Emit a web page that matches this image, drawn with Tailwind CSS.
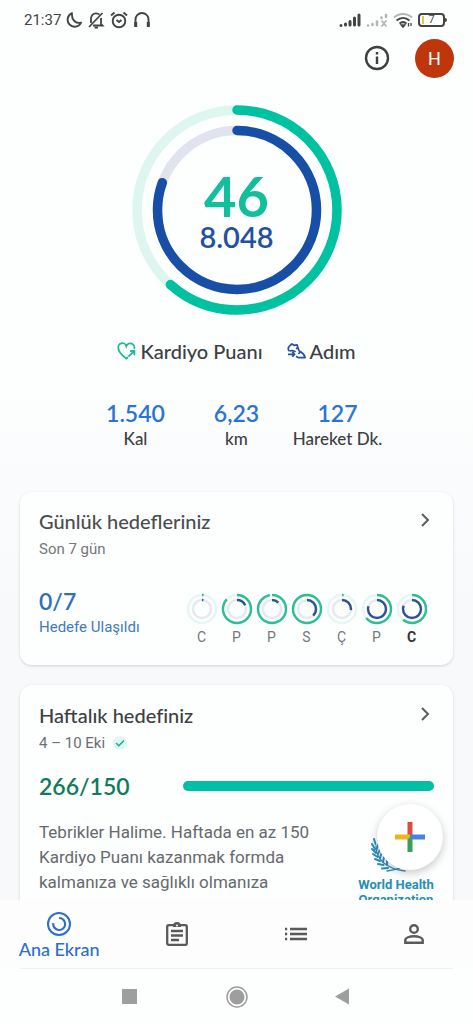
<!DOCTYPE html>
<html lang="tr">
<head>
<meta charset="utf-8">
<meta name="viewport" content="width=device-width, initial-scale=1">
<title>Ana Ekran</title>
<script src="https://cdn.jsdelivr.net/npm/@tailwindcss/browser@4"></script>
</head>
<body class="bg-white font-[Roboto,sans-serif] text-[#5f6368]">
<div class="flex h-screen flex-col overflow-hidden bg-[#fdfefe]">

  <!-- Status bar -->
  <div class="flex h-[38px] shrink-0 items-center justify-between pt-[2px] pr-[26px] pl-6 text-[#444]">
    <div class="flex items-center gap-[5px]">
      <span class="text-[15px] leading-5">21:37</span>
      <svg class="size-4" viewBox="0 0 16 16" fill="none" stroke="currentColor" stroke-width="1.9" stroke-linejoin="round"><path d="M6 1.2A7 7 0 1 0 15 10.6C10 12 5.200 8 6 1.200Z"/></svg>
      <svg class="h-[18px] w-[18px]" viewBox="0 0 18 18" fill="none" stroke="currentColor" stroke-width="1.800"><path d="M2 16 15.500 2"/><path d="M4 12V7.500C4 4.500 6 2.300 9 2.300c1.400 0 2.600.5 3.500 1.400M14 7v6l1.500 1.500H6"/><path d="M7.500 16.500h3.500" stroke-width="2"/></svg>
      <svg class="h-[18px] w-[18px]" viewBox="0 0 18 18" fill="none" stroke="currentColor" stroke-width="1.900"><circle cx="9" cy="10" r="6.300"/><path d="M1 4.500 4.500 1.500M17 4.500l-3.500-3M6.500 9l2.500 2 2.500-2"/></svg>
      <svg class="h-[18px] w-[18px]" viewBox="0 0 18 18" fill="none" stroke="currentColor" stroke-width="1.900"><path d="M2.500 15V8.500a6.500 6.500 0 0 1 13 0V15"/><path d="M2.700 11v5M15.300 11v5" stroke-width="3"/></svg>
    </div>
    <div class="flex items-center gap-[5px]">
      <svg class="h-4 w-[22px]" viewBox="0 0 22 16" stroke="#444" stroke-width="3" stroke-linecap="round"><path d="M2 13.500v0M6.500 13v-1M11 13V9.500M15.500 13V6M20 13V3"/></svg>
      <svg class="h-4 w-[22px]" viewBox="0 0 22 16" fill="none" stroke="#b5b5b5" stroke-width="2.600" stroke-linecap="round"><path d="M2 13.500v0M6.500 13v-1M11 13V9.500M15.500 6V5.500M20 5V3"/><path stroke-width="1.800" d="m16 9 4 5m0-5-4 5"/></svg>
      <svg class="h-4 w-5" viewBox="0 0 20 16" fill="none" stroke="#444" stroke-width="2"><path stroke="#b5b5b5" d="M1 5.500C6 .8 14 .8 19 5.500"/><path d="M3.500 8.500c4-3.500 9-3.500 13 0M6.500 11.500c2.300-1.800 4.700-1.800 7 0"/><path d="M8 13h4l-2 2.300ZM15.500 11v3.500M18 11v3" stroke-width="1.300"/></svg>
      <div class="flex items-center">
        <div class="relative flex h-[14px] w-[27px] items-center justify-center rounded-[4px] border-2 border-[#444] text-[11px] leading-3"><span class="absolute inset-y-[1px] left-[2px] w-[2px] bg-[#e8c64a]"></span>7</div>
        <div class="h-1 w-[2px] rounded-r bg-[#444]"></div>
      </div>
    </div>
  </div>

  <main class="relative flex min-h-0 flex-1 flex-col overflow-hidden bg-linear-to-b from-[#fdfefe] from-40% to-[#f7f9fb] to-65%">
    <!-- Account row -->
    <div class="flex h-10 shrink-0 items-center justify-end gap-6 pr-[19px]">
      <button type="button" aria-label="Bilgi" class="size-7 text-[#3c4043]"><svg viewBox="0 0 28 28" fill="none" stroke="currentColor" stroke-width="2.400"><circle cx="14" cy="14" r="11"/><path d="M14 12.500V20M14 8v2.600"/></svg></button>
      <button type="button" aria-label="Hesap" class="size-[39px] rounded-full bg-[#bf360c] text-[18px] text-white">H</button>
    </div>

    <!-- Activity rings -->
    <section class="mt-[27px] flex shrink-0 flex-col items-center">
      <div class="relative flex size-[210px] flex-col items-center justify-center pt-1 font-[Lato,sans-serif]">
        <svg class="absolute inset-0 -rotate-90" viewBox="0 0 210 210" fill="none" stroke-width="9.500" stroke-linecap="round">
          <circle cx="105" cy="105" r="100" stroke="#def6f0"/>
          <circle cx="105" cy="105" r="79.500" stroke="#e1e4ef"/>
          <circle cx="105" cy="105" r="100" stroke="#00c2a0" pathLength="1000" stroke-dasharray="616 1000"/>
          <circle cx="105" cy="105" r="79.500" stroke="#174ea6" pathLength="1000" stroke-dasharray="806 1000"/>
        </svg>
        <span class="text-[56px] leading-[50px] font-bold text-[#12bf9c]">46</span>
        <span class="text-[29px] leading-8 font-semibold text-[#2450a0]">8.048</span>
      </div>
      <div class="mt-6 flex items-center gap-6 font-[Lato,sans-serif] text-[20px] leading-6 font-medium text-[#3c4043]">
        <span class="flex items-center gap-1"><svg class="size-[19px]" viewBox="0 0 20 20" fill="none" stroke="#1dba94" stroke-width="1.900"><path d="M11.500 16 9.800 17.500C4 13 1.500 10.500 1.500 6.800a4.300 4.300 0 0 1 8.300-2.300 4.300 4.300 0 0 1 8.300 2.800"/><path d="m12 15.500 6-6M13.800 9.500H18.300V14"/></svg>Kardiyo Puanı</span>
        <span class="flex items-center gap-1"><svg class="size-[19px]" viewBox="0 0 20 20" fill="none" stroke="#2b4fa0" stroke-width="1.800" stroke-linejoin="round"><path d="M2.500 9.500C1 8 1 6.500 2 5l3-3 2.500 1.500L10.500 3l2 6c2.500 2 6 3 6.500 7.500H12l-2.500-1.500"/><path d="M2.500 9.500c3-1 5-.5 6.500 1M1 13h6.500M5.500 10.500 8 13l-2.500 2.500M9.500 7l2-.8M12 12.500l2-1.800"/></svg>Adım</span>
      </div>
      <dl class="mt-9 flex justify-center text-center font-[Lato,sans-serif]">
        <div class="flex w-[101px] flex-col-reverse"><dt class="text-[17px] leading-6 font-medium text-[#3c4043]">Kal</dt><dd class="text-[23px] leading-7 font-semibold text-[#2a73d9]">1.540</dd></div>
        <div class="flex w-[101px] flex-col-reverse"><dt class="text-[17px] leading-6 font-medium text-[#3c4043]">km</dt><dd class="text-[23px] leading-7 font-semibold text-[#2a73d9]">6,23</dd></div>
        <div class="flex w-[101px] flex-col-reverse"><dt class="text-[17px] leading-6 font-medium whitespace-nowrap text-[#3c4043]">Hareket Dk.</dt><dd class="text-[23px] leading-7 font-semibold text-[#2a73d9]">127</dd></div>
      </dl>
    </section>

    <!-- Daily goals -->
    <section class="mx-5 mt-[41px] shrink-0 rounded-xl bg-[#fdfffe] px-[19px] pt-[17px] pb-[18px] shadow-[0_1px_3px_rgba(60,64,67,0.2)]">
      <div class="flex items-start justify-between">
        <div>
          <h2 class="font-[Lato,sans-serif] text-[20px] leading-6 font-medium text-[#4a4d50]">Günlük hedefleriniz</h2>
          <p class="mt-1 text-[15px] leading-6 text-[#74777b]">Son 7 gün</p>
        </div>
        <a href="#" aria-label="Günlük hedefler"><svg class="mt-[2px] size-[18px]" viewBox="0 0 18 18" fill="none" stroke="#5a5d60" stroke-width="2"><path d="m6 3 6 6-6 6"/></svg></a>
      </div>
      <div class="mt-6 flex items-start justify-between">
        <div>
          <p class="font-[Lato,sans-serif] text-[23px] leading-8 font-semibold text-[#2f6fc0]">0/7</p>
          <p class="text-[15px] leading-5 whitespace-nowrap text-[#4379bd]">Hedefe Ulaşıldı</p>
        </div>
        <ol id="days" class="mr-[5px] flex text-[14px]"></ol>
      </div>
    </section>

    <!-- Weekly goal -->
    <section class="mx-5 mt-5 flex-1 shrink-0 rounded-t-xl bg-[#fdfefe] px-[19px] pt-[18px] shadow-[0_1px_3px_rgba(60,64,67,0.2)]">
      <div class="flex items-start justify-between">
        <div>
          <h2 class="font-[Lato,sans-serif] text-[20px] leading-6 font-medium text-[#3c4043]">Haftalık hedefiniz</h2>
          <p class="mt-1 flex items-center gap-2 text-[15px] leading-6 text-[#6b6e72]">4 – 10 Eki
            <svg class="size-[14px] rounded-full bg-[#dff8f1]" viewBox="0 0 14 14" fill="none" stroke="#12b18f" stroke-width="1.500"><path d="m3 7 2.800 2.800L11 4.500"/></svg></p>
        </div>
        <a href="#" aria-label="Haftalık hedef"><svg class="mt-[2px] size-[18px]" viewBox="0 0 18 18" fill="none" stroke="#5a5d60" stroke-width="2"><path d="m6 3 6 6-6 6"/></svg></a>
      </div>
      <div class="mt-[15px] flex items-center">
        <p class="w-36 shrink-0 font-[Lato,sans-serif] text-[23px] leading-8 font-semibold text-[#127a5c]">266/150</p>
        <div class="h-[10px] flex-1 rounded-full bg-[#00bfa5]"></div>
      </div>
      <div class="mt-[18px] flex justify-between">
        <p class="w-[296px] text-[17px] leading-[25px] text-[#66696d]">Tebrikler Halime. Haftada en az 150 Kardiyo Puanı kazanmak formda kalmanıza ve sağlıklı olmanıza</p>
        <div class="flex w-[76px] shrink-0 flex-col items-center pt-[14px]">
          <svg class="h-10 w-[50px]" viewBox="0 0 50 40" fill="none" stroke="#2a8dbd" stroke-linecap="round">
            <path stroke-width="1.300" d="M5 12C5 26 16 35 34 37M45 12C45 26 34 35 16 37"/>
            <path stroke-width="2" d="M4.500 10 3 5M4 15 1 10M5 19 1 15M6.500 23 2 20M9 27 4 25M12.500 31 7 30M17 34 11 34.500M5.500 16 7 11M7 20 9 15M9 24 10.500 19M12 28 13 23M16 31 16 26M45.500 10 47 5M46 15l3-5M45 19l4-4M43.500 23l4.500-3M41 27l5-2M37.500 31l5.500-1M33 34l6 .5"/>
            <g stroke-width="1"><circle cx="25" cy="16" r="12"/><path d="M13 16h24M25 4v24M16.500 7.500l17 17M33.500 7.500l-17 17"/></g>
          </svg>
          <p class="mt-[3px] text-center text-[13px] leading-[15px] font-bold whitespace-nowrap text-[#268fb5]">World Health<br>Organization</p>
        </div>
      </div>
    </section>

    <button type="button" aria-label="Ekle" class="absolute right-[30px] bottom-[30px] flex size-[66px] items-center justify-center rounded-full bg-white shadow-[0_3px_8px_rgba(60,64,67,0.28)]">
      <svg class="size-[30px]" viewBox="0 0 30 30"><path fill="#db4c40" d="M12.500 0h5v15h-5z"/><path fill="#edb71c" d="M0 12.500h15v5H0z"/><path fill="#4681e6" d="M15 12.500h15v5H15z"/><path fill="#3a9e5b" d="M12.500 17.500 15 15l2.500 2.500V30h-5z"/></svg>
    </button>
  </main>

  <!-- App tabs -->
  <nav class="grid h-[68px] shrink-0 grid-cols-4 bg-[#fdfdfd] text-[#5a5a5a]">
    <a href="#" class="flex flex-col items-center pt-3 text-[#2b6fc9]">
      <svg class="size-6" viewBox="0 0 24 24" fill="none" stroke="currentColor" stroke-width="2"><circle cx="12" cy="12" r="11"/><path d="M12 6a6 6 0 1 1-5.800 5.200" stroke-width="2.200"/></svg>
      <span class="font-[Lato,sans-serif] text-[18px] leading-[26px] font-medium">Ana Ekran</span>
    </a>
    <a href="#" aria-label="Günlük" class="flex items-center justify-center"><svg class="h-6 w-[22px]" viewBox="0 0 22 24" fill="none" stroke="currentColor" stroke-width="2.300"><rect x="1.200" y="3.200" width="19.600" height="19.600" rx="1.500"/><path d="M5 9h12M5 13.500h12M5 18h8"/><path fill="currentColor" stroke="none" d="M7 4a4 4 0 0 1 8 0v1H7z"/><circle cx="11" cy="3.500" r="1" fill="#fff" stroke="none"/></svg></a>
    <a href="#" aria-label="Göz at" class="flex items-center justify-center"><svg class="h-[14px] w-[22px]" viewBox="0 0 22 14" fill="none" stroke="currentColor" stroke-width="2.400"><path d="M0 2h2.200M5 2h17M0 7h2.200M5 7h17M0 12h2.200M5 12h17"/></svg></a>
    <a href="#" aria-label="Profil" class="flex items-center justify-center"><svg class="size-5" viewBox="0 0 20 20" fill="none" stroke="currentColor" stroke-width="2.400"><circle cx="10" cy="5" r="3.800"/><path d="M1.300 18.700v-2.400C1.300 13.500 6 12.300 10 12.300s8.700 1.200 8.700 4v2.400Z"/></svg></a>
  </nav>

  <!-- System navigation -->
  <div class="mx-5 h-px shrink-0 bg-[#f1f1f1]"></div>
  <div class="flex h-[55px] shrink-0 items-center justify-center gap-[85px] text-[#9e9e9e]">
    <button type="button" aria-label="Son uygulamalar" class="size-[22px]"><svg viewBox="0 0 22 22"><rect x="3" y="3" width="15" height="15" fill="currentColor"/></svg></button>
    <button type="button" aria-label="Ana sayfa" class="size-[22px]"><svg viewBox="0 0 22 22"><circle cx="11" cy="11" r="10" fill="none" stroke="currentColor" stroke-width="1.500"/><circle cx="11" cy="11" r="7.500" fill="currentColor"/></svg></button>
    <button type="button" aria-label="Geri" class="size-[22px]"><svg viewBox="0 0 22 22"><path d="M2 10.500 16 2.500v16z" fill="currentColor"/></svg></button>
  </div>
</div>

<script>
  const days = [
    ["C", 20, 25], ["P", 870, 180], ["P", 975, 125], ["S", 1000, 380],
    ["Ç", 20, 270], ["P", 640, 800], ["C", 610, 810],
  ];
  document.getElementById("days").innerHTML = days.map(([label, cardio, steps], i) => `
    <li class="flex w-[35px] flex-col items-center ${i === days.length - 1 ? "font-bold text-[#333]" : "text-[#74777b]"}">
      <svg class="mt-2 h-8 w-8 shrink-0 -rotate-90" viewBox="0 0 32 32" fill="none" stroke-width="2.400">
        <circle cx="16" cy="16" r="14" stroke="#e6f6f3"/>
        <circle cx="16" cy="16" r="9" stroke="#e6e8f0"/>
        <circle cx="16" cy="16" r="14" stroke="#2fbd98" pathLength="1000" stroke-dasharray="${cardio} 1000"/>
        <circle cx="16" cy="16" r="9" stroke="#2d509c" pathLength="1000" stroke-dasharray="${steps} 1000"/>
      </svg>
      <span class="mt-[2px] leading-5">${label}</span>
    </li>`).join("");
</script>
</body>
</html>
